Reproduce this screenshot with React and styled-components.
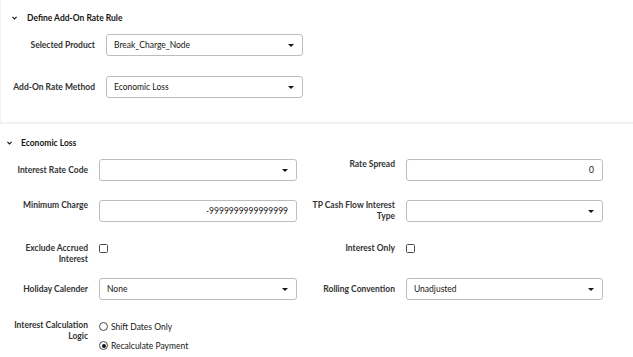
import React from "react";
import styled, { createGlobalStyle } from "styled-components";

const GlobalStyle = createGlobalStyle`
  body {
    margin: 0;
    background: #ffffff;
    font-family: Lato, "Noto Sans", sans-serif;
    color: #161513;
  }
`;

const Page = styled.div`
  width: 633px;
  height: 357px;
  overflow: hidden;
  background: #fff;
`;

const Card = styled.section`
  height: 124px;
  border-left: 1px solid #f2f2f2;
  border-bottom: 2px solid #f2f2f2;
  box-sizing: border-box;
  padding: 12px 0 0 11px;
`;

const Section = styled.section`
  padding: 13px 0 0 0;
`;

const Header = styled.div`
  display: flex;
  align-items: center;
  gap: ${(p) => p.$gap}px;
  height: 12px;
  padding-left: ${(p) => p.$indent || 0}px;
  font-size: 8.5px;
  font-weight: 700;
  color: #161513;
`;

const Chevron = () => (
  <svg width="5" height="4" viewBox="0 0 5 4">
    <path d="M0.4 0.8 L2.5 2.9 L4.6 0.8" fill="none" stroke="#161513" strokeWidth="1.1" />
  </svg>
);

const Stack = styled.div`
  display: flex;
  flex-direction: column;
`;

const Row = styled.div`
  display: flex;
  gap: 10px;
  margin-top: ${(p) => p.$top}px;
`;

const Field = styled.div`
  display: flex;
  align-items: ${(p) => (p.$center ? "center" : "flex-start")};
  gap: 11px;
`;

const Label = styled.div`
  width: ${(p) => p.$width || 88}px;
  flex-shrink: 0;
  text-align: right;
  font-size: 8.5px;
  line-height: 11px;
  font-weight: 700;
  color: #333;
`;

const Box = styled.div`
  width: ${(p) => p.$width || 198}px;
  height: 22px;
  box-sizing: border-box;
  border: 1px solid #bdbdbd;
  border-radius: 3px;
  background: #fff;
  display: flex;
  align-items: center;
  justify-content: ${(p) => (p.$right ? "flex-end" : "space-between")};
  padding: 0 8px 0 7px;
  font-size: 8.5px;
  color: #161513;
`;

const Caret = styled.span`
  width: 0;
  height: 0;
  margin-left: auto;
  border-left: 3px solid transparent;
  border-right: 3px solid transparent;
  border-top: 3px solid #161513;
`;

const CheckCell = styled.div`
  width: 198px;
`;

const Check = styled.span`
  display: block;
  width: 9px;
  height: 9px;
  box-sizing: border-box;
  border: 1px solid #4a4a4a;
  border-radius: 1.5px;
  margin-top: 1px;
`;

const Options = styled.div`
  display: flex;
  flex-direction: column;
  gap: 8px;
  padding-top: 1px;
`;

const Option = styled.div`
  display: flex;
  align-items: center;
  gap: 3px;
  height: 11px;
  font-size: 8.5px;
  color: #161513;
`;

const Radio = styled.span`
  width: 9px;
  height: 9px;
  box-sizing: border-box;
  border: 1px solid #4a4a4a;
  border-radius: 50%;
  display: flex;
  align-items: center;
  justify-content: center;
  &::after {
    content: "";
    width: 4px;
    height: 4px;
    border-radius: 50%;
    background: ${(p) => (p.$on ? "#161513" : "transparent")};
  }
`;

function Select({ value, width }) {
  return (
    <Box $width={width}>
      <span>{value}</span>
      <Caret />
    </Box>
  );
}

export default function App() {
  return (
    <Page>
      <GlobalStyle />
      <Card>
        <Header $gap={10}>
          <Chevron />
          <span>Define Add-On Rate Rule</span>
        </Header>
        <Stack>
          <Row $top={10}>
            <Field $center>
              <Label $width={83}>Selected Product</Label>
              <Select value="Break_Charge_Node" width={197} />
            </Field>
          </Row>
          <Row $top={20}>
            <Field $center>
              <Label $width={83}>Add-On Rate Method</Label>
              <Select value="Economic Loss" width={197} />
            </Field>
          </Row>
        </Stack>
      </Card>

      <Section>
        <Header $gap={9} $indent={7}>
          <Chevron />
          <span>Economic Loss</span>
        </Header>
        <Stack>
          <Row $top={10}>
            <Field $center>
              <Label>Interest Rate Code</Label>
              <Select value="" />
            </Field>
            <Field>
              <Label>Rate Spread</Label>
              <Box $width={197} $right>0</Box>
            </Field>
          </Row>
          <Row $top={19}>
            <Field>
              <Label>Minimum Charge</Label>
              <Box $right>-9999999999999999</Box>
            </Field>
            <Field>
              <Label>TP Cash Flow Interest Type</Label>
              <Select value="" width={197} />
            </Field>
          </Row>
          <Row $top={21}>
            <Field>
              <Label>Exclude Accrued Interest</Label>
              <CheckCell>
                <Check />
              </CheckCell>
            </Field>
            <Field>
              <Label>Interest Only</Label>
              <Check />
            </Field>
          </Row>
          <Row $top={13}>
            <Field $center>
              <Label>Holiday Calender</Label>
              <Select value="None" />
            </Field>
            <Field $center>
              <Label>Rolling Convention</Label>
              <Select value="Unadjusted" width={197} />
            </Field>
          </Row>
          <Row $top={20}>
            <Field>
              <Label>Interest Calculation Logic</Label>
              <Options>
                <Option>
                  <Radio />
                  Shift Dates Only
                </Option>
                <Option>
                  <Radio $on />
                  Recalculate Payment
                </Option>
              </Options>
            </Field>
          </Row>
        </Stack>
      </Section>
    </Page>
  );
}
